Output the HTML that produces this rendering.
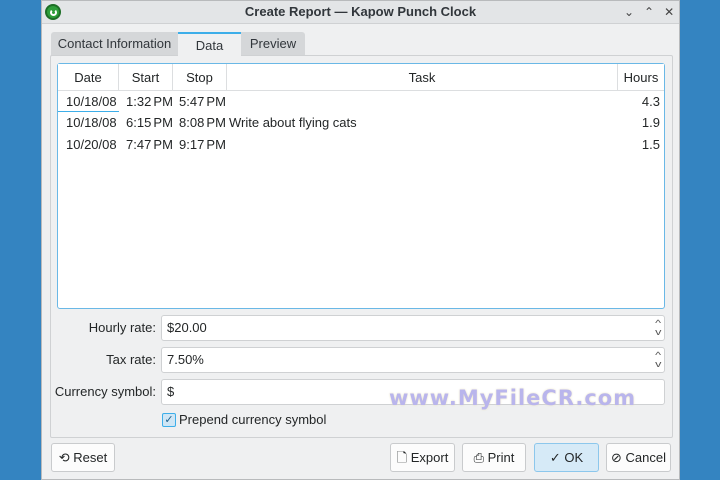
<!DOCTYPE html>
<html><head><style>
*{box-sizing:border-box;margin:0;padding:0}
body{width:720px;height:480px;background:#3484c1;font-family:"Liberation Sans","DejaVu Sans",sans-serif;font-size:13px;color:#232627;position:relative;overflow:hidden}
.win{position:absolute;left:41px;top:0;width:639px;height:480px;background:#eff0f1;border:1px solid #b8babc}
.abs{position:absolute}
.title{position:absolute;left:0;top:0;width:100%;height:23px;background:#e3e5e7;border-bottom:1px solid #cfd1d3;text-align:center;font-weight:bold;line-height:22px;font-size:13px;color:#31363b}
.tab{position:absolute;top:31px;height:24px;line-height:24px;text-align:center;background:#d5d7d9;color:#31363b}
.panel{position:absolute;left:8px;top:54px;width:623px;height:383px;border:1px solid #cfd1d3;background:#eff0f1;border-radius:2px}
.table{position:absolute;left:15px;top:62px;width:608px;height:246px;border:1px solid #6ab8e6;background:#fff;border-radius:3px}
.hd{position:absolute;top:0;height:27px;line-height:27px;text-align:center;border-right:1px solid #dcdee0;border-bottom:1px solid #dcdee0;background:#fff}
.cell{position:absolute;height:21px;line-height:21px;word-spacing:-1.5px}
.inp{position:absolute;left:119px;width:504px;height:26px;background:#fff;border:1px solid #cfd1d3;border-radius:3px;padding-left:5px;line-height:24px}
.lbl{position:absolute;width:114px;text-align:right;line-height:26px}
.btn{position:absolute;top:442px;height:29px;border:1px solid #c9cbcd;border-radius:3px;background:#fcfcfc;line-height:27px;text-align:center}
.spin{position:absolute;right:4px;top:3px;font-size:9px;line-height:9px;color:#555;transform:scaleX(1.4)}
</style></head><body>
<div class="win">
<div class="title">Create Report — Kapow Punch Clock</div>
<div class="abs" style="left:3px;top:3px;width:16px;height:16px;border-radius:50%;background:#2e9e3a;border:2px solid #1d6e26"><div class="abs" style="left:3px;top:3px;width:7px;height:7px;border-radius:50%;border:2px solid #fff;border-top-color:transparent"></div></div>
<div class="abs" style="left:582px;top:4px;font-size:12px;color:#444">⌄&nbsp;&nbsp;&nbsp;⌃&nbsp;&nbsp;&nbsp;✕</div>
<div class="tab" style="left:9px;width:127px;border-radius:3px 0 0 0">Contact Information</div>
<div class="tab" style="left:136px;width:63px;background:#eff0f1;border-top:2px solid #3daee9;z-index:2;height:25px">Data</div>
<div class="tab" style="left:199px;width:64px;border-radius:0 3px 0 0">Preview</div>
<div class="panel"></div>
<div class="table">
 <div class="hd" style="left:0;width:61px">Date</div>
 <div class="hd" style="left:61px;width:54px">Start</div>
 <div class="hd" style="left:115px;width:54px">Stop</div>
 <div class="hd" style="left:169px;width:391px">Task</div>
 <div class="hd" style="left:560px;width:46px;border-right:0">Hours</div>
 <div class="abs" style="left:0;top:47px;width:61px;height:1px;background:#3daee9"></div>
 <div class="cell" style="top:27px;left:8px">10/18/08</div><div class="cell" style="top:27px;left:68px">1:32 PM</div><div class="cell" style="top:27px;left:121px">5:47 PM</div><div class="cell" style="top:27px;right:4px">4.3</div>
 <div class="cell" style="top:48px;left:8px">10/18/08</div><div class="cell" style="top:48px;left:68px">6:15 PM</div><div class="cell" style="top:48px;left:121px">8:08 PM</div><div class="cell" style="top:48px;left:171px;word-spacing:0">Write about flying cats</div><div class="cell" style="top:48px;right:4px">1.9</div>
 <div class="cell" style="top:70px;left:8px">10/20/08</div><div class="cell" style="top:70px;left:68px">7:47 PM</div><div class="cell" style="top:70px;left:121px">9:17 PM</div><div class="cell" style="top:70px;right:4px">1.5</div>
</div>
<div class="lbl" style="top:314px">Hourly rate:</div>
<div class="inp" style="top:314px">$20.00<div class="spin">^<br>v</div></div>
<div class="lbl" style="top:346px">Tax rate:</div>
<div class="inp" style="top:346px">7.50%<div class="spin">^<br>v</div></div>
<div class="lbl" style="top:378px">Currency symbol:</div>
<div class="inp" style="top:378px">$</div>
<div class="abs" style="left:120px;top:412px;width:14px;height:14px;border-radius:2px;background:#cfe6f5;border:1px solid #3daee9;font-size:11px;line-height:12px;text-align:center;color:#1d5f8a">✓</div>
<div class="abs" style="left:137px;top:411px">Prepend currency symbol</div>
<div class="abs" style="left:347px;top:385px;font-family:'DejaVu Sans',sans-serif;font-size:21px;font-weight:bold;color:#b9b5ec;letter-spacing:1px;text-shadow:0 0 2px #e8e0c0">www.MyFileCR.com</div>
<div class="btn" style="left:9px;width:64px">⟲ Reset</div>
<div class="btn" style="left:348px;width:65px">🗋 Export</div>
<div class="btn" style="left:420px;width:64px">⎙ Print</div>
<div class="btn" style="left:492px;width:65px;background:#d6eaf7;border-color:#8cc7ec">✓ OK</div>
<div class="btn" style="left:564px;width:65px">⊘ Cancel</div>
</div>
</body></html>
